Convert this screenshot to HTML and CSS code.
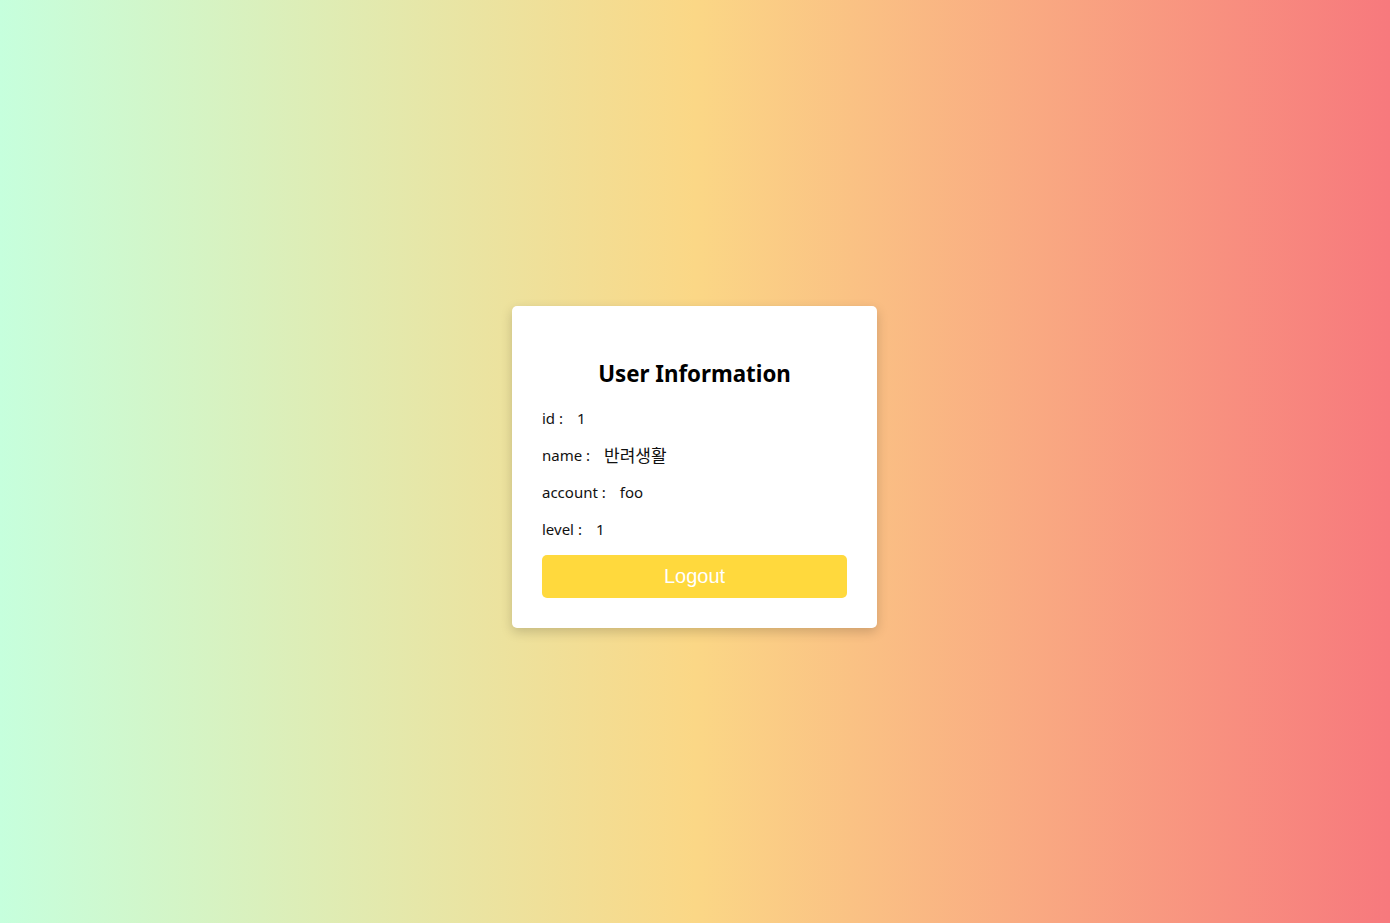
FILE: index.html
```html
<!DOCTYPE html>
<html lang="ko">
<head>
<meta charset="utf-8">
<title>User Information</title>
<link rel="stylesheet" href="styles.css">
</head>
<body>
<main class="page">
  <section class="card">
    <h2 class="title">User Information</h2>
    <div class="info">
      <p class="row"><span class="label">id :</span><span class="value">1</span></p>
      <p class="row"><span class="label">name :</span><span class="value value-ko">반려생활</span></p>
      <p class="row"><span class="label">account :</span><span class="value">foo</span></p>
      <p class="row"><span class="label">level :</span><span class="value">1</span></p>
    </div>
    <button class="logout" type="button">Logout</button>
  </section>
</main>
</body>
</html>
```
FILE: styles.css
```css
html, body {
  margin: 0;
  padding: 0;
}
body {
  font-family: "Noto Sans", "Noto Sans CJK KR", sans-serif;
  background: linear-gradient(90deg, #c6ffdd 0%, #fbd786 50%, #f7797d 100%);
  min-height: 100vh;
}
.page {
  box-sizing: border-box;
  min-height: 100vh;
  padding-top: 11px;
  padding-right: 1px;
  display: flex;
  align-items: center;
  justify-content: center;
}
.card {
  box-sizing: border-box;
  width: 365px;
  background: #fff;
  border-radius: 5px;
  box-shadow: 0 4px 12px rgba(0, 0, 0, 0.18);
  padding: 30px;
  display: flex;
  flex-direction: column;
}
.title {
  margin: 24px 0 0;
  font-size: 22.3px;
  line-height: 28px;
  font-weight: 700;
  text-align: center;
  color: #000;
}
.info {
  margin-top: 20px;
  display: flex;
  flex-direction: column;
  gap: 16px;
}
.row {
  margin: 0;
  height: 21px;
  display: flex;
  align-items: center;
  font-size: 15px;
  line-height: 21px;
  color: #111;
}
.value {
  margin-left: 14px;
}
.value-ko {
  font-size: 17px;
}
.logout {
  margin-top: 15px;
  height: 43px;
  border: none;
  border-radius: 5px;
  background: #ffd93d;
  color: #fff;
  font-family: "Liberation Sans", Arial, sans-serif;
  font-size: 20px;
  cursor: pointer;
}
```
